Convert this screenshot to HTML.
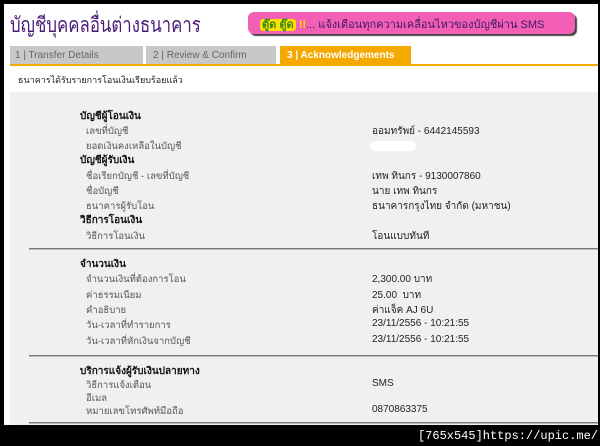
<!DOCTYPE html>
<html><head><meta charset="utf-8"><style>
*{margin:0;padding:0;box-sizing:border-box}
body{width:600px;height:446px;background:#000;position:relative;overflow:hidden;font-family:"Liberation Sans","Noto Sans CJK SC",sans-serif}
#w{position:absolute;left:4px;top:4px;width:594px;height:421px;background:#fff}
.a{position:absolute;white-space:nowrap}
.t{font-size:9.5px;color:#555}
.h{font-size:10px;font-weight:bold;color:#111}
.v{font-size:10px;color:#222}
.hr{position:absolute;left:25px;right:0;height:2px;background:#777;border-bottom:1px solid #bbb}
</style></head><body>
<div id="w">
<div class="a" style="left:6px;top:5px;font-size:21px;color:#4a1a78;transform:scaleX(0.8);transform-origin:left top">บัญชีบุคคลอื่นต่างธนาคาร</div>
<div class="a" style="left:244px;top:8px;width:327px;height:22px;background:#f35fb5;border-radius:6px;box-shadow:2px 2px 1px #444;font-size:11px;color:#3a1a60;padding:3px 0 0 12px"><b style="color:#3a8a10;background:#ffe000;border-radius:3px;padding:0 2px">ตู๊ด ตู๊ด</b> <b style="color:#ffe000">!!</b>... แจ้งเตือนทุกความเคลื่อนไหวของบัญชีผ่าน SMS</div>
<div class="a" style="left:6px;top:42px;width:133px;height:18px;background:#c8c8c8;font-size:10px;color:#666;padding:4px 0 0 5px">1 | Transfer Details</div>
<div class="a" style="left:142px;top:42px;width:130px;height:18px;background:#c8c8c8;font-size:10px;color:#666;padding:4px 0 0 7px">2 | Review &amp; Confirm</div>
<div class="a" style="left:276px;top:42px;width:131px;height:18px;background:#f5a800;font-size:10px;color:#fff;font-weight:bold;padding:4px 0 0 7px">3 | Acknowledgements</div>
<div class="a" style="left:6px;top:60px;right:0;height:2px;background:#f5a800"></div>
<div class="a t" style="left:14px;top:69px;font-size:9px;color:#222">ธนาคารได้รับรายการโอนเงินเรียบร้อยแล้ว</div>
<div class="a" style="left:6px;top:88px;right:0;bottom:0;background:#f0f0f0"></div>
<div class="a h" style="left:76px;top:105px">บัญชีผู้โอนเงิน</div>
<div class="a t" style="left:82px;top:120px">เลขที่บัญชี</div><div class="a v" style="left:368px;top:120px">ออมทรัพย์ - 6442145593</div>
<div class="a t" style="left:82px;top:135px">ยอดเงินคงเหลือในบัญชี</div>
<div class="a" style="left:366px;top:137px;width:46px;height:10px;background:#fff;border-radius:5px"></div>
<div class="a h" style="left:76px;top:149px">บัญชีผู้รับเงิน</div>
<div class="a t" style="left:82px;top:165px">ชื่อเรียกบัญชี - เลขที่บัญชี</div><div class="a v" style="left:368px;top:165px">เทพ ทินกร - 9130007860</div>
<div class="a t" style="left:82px;top:180px">ชื่อบัญชี</div><div class="a v" style="left:368px;top:180px">นาย เทพ ทินกร</div>
<div class="a t" style="left:82px;top:195px">ธนาคารผู้รับโอน</div><div class="a v" style="left:368px;top:195px">ธนาคารกรุงไทย จำกัด (มหาชน)</div>
<div class="a h" style="left:76px;top:209px">วิธีการโอนเงิน</div>
<div class="a t" style="left:82px;top:225px">วิธีการโอนเงิน</div><div class="a v" style="left:368px;top:225px">โอนแบบทันที</div>
<div class="hr" style="top:244px"></div>
<div class="a h" style="left:76px;top:253px">จำนวนเงิน</div>
<div class="a t" style="left:82px;top:268px">จำนวนเงินที่ต้องการโอน</div><div class="a v" style="left:368px;top:268px">2,300.00 บาท</div>
<div class="a t" style="left:82px;top:284px">ค่าธรรมเนียม</div><div class="a v" style="left:368px;top:284px">25.00 &nbsp;บาท</div>
<div class="a t" style="left:82px;top:299px">คำอธิบาย</div><div class="a v" style="left:368px;top:299px">ค่าแจ็ค AJ 6U</div>
<div class="a t" style="left:82px;top:314px">วัน-เวลาที่ทำรายการ</div><div class="a v" style="left:368px;top:314px">23/11/2556 - 10:21:55</div>
<div class="a t" style="left:82px;top:330px">วัน-เวลาที่หักเงินจากบัญชี</div><div class="a v" style="left:368px;top:330px">23/11/2556 - 10:21:55</div>
<div class="hr" style="top:351px"></div>
<div class="a h" style="left:76px;top:360px">บริการแจ้งผู้รับเงินปลายทาง</div>
<div class="a t" style="left:82px;top:374px">วิธีการแจ้งเตือน</div><div class="a v" style="left:368px;top:374px">SMS</div>
<div class="a t" style="left:82px;top:387px">อีเมล</div>
<div class="a t" style="left:82px;top:400px">หมายเลขโทรศัพท์มือถือ</div><div class="a v" style="left:368px;top:400px">0870863375</div>
<div class="hr" style="top:418px"></div>
</div>
<div class="a" style="right:2px;top:429px;font-size:12px;color:#fff;font-family:'Liberation Mono',monospace">[765x545]https://upic.me/</div>
</body></html>
